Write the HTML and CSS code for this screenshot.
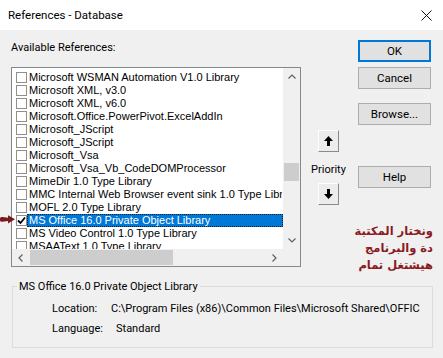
FILE: index.html
```html
<!DOCTYPE html>
<html lang="en">
<head>
    <meta charset="UTF-8">
    <meta name="viewport" content="width=device-width, initial-scale=1.0">
    <title>References - Database</title>
    <link rel="stylesheet" href="styles.css">
</head>
<body>
    <div class="titlebar">
        <span class="title">References - Database</span>
        <svg class="close" width="11" height="11" viewBox="0 0 11 11">
            <path d="M0.5 0.5 L10.5 10.5 M10.5 0.5 L0.5 10.5" stroke="#111" stroke-width="1" fill="none"/>
        </svg>
    </div>

    <div class="dialog">
        <div class="refs">
            <div class="caption">Available References:</div>
            <div class="listbox">
                <svg class="marker" width="15" height="9" viewBox="0 0 15 9">
                    <path d="M0 3.5 Q0 1.5 2.5 2 L8 2.8 L8 0.2 L15 4.3 L8 8.6 L8 6 L2.5 6.8 Q0 7.2 0 5.2 Z" fill="#7b1a1e"/>
                </svg>
                <div class="list-main">
                    <ul class="items">
                        <li class="item"><span class="check"></span><span class="name">Microsoft WSMAN Automation V1.0 Library</span></li>
                        <li class="item"><span class="check"></span><span class="name">Microsoft XML, v3.0</span></li>
                        <li class="item"><span class="check"></span><span class="name">Microsoft XML, v6.0</span></li>
                        <li class="item"><span class="check"></span><span class="name">Microsoft.Office.PowerPivot.ExcelAddIn</span></li>
                        <li class="item"><span class="check"></span><span class="name">Microsoft_JScript</span></li>
                        <li class="item"><span class="check"></span><span class="name">Microsoft_JScript</span></li>
                        <li class="item"><span class="check"></span><span class="name">Microsoft_Vsa</span></li>
                        <li class="item"><span class="check"></span><span class="name">Microsoft_Vsa_Vb_CodeDOMProcessor</span></li>
                        <li class="item"><span class="check"></span><span class="name">MimeDir 1.0 Type Library</span></li>
                        <li class="item"><span class="check"></span><span class="name">MMC Internal Web Browser event sink 1.0 Type Library</span></li>
                        <li class="item"><span class="check"></span><span class="name">MOFL 2.0 Type Library</span></li>
                        <li class="item selected">
                            <span class="check">
                                <svg width="9" height="9" viewBox="0 0 9 9"><path d="M1 4.5 L3.5 7 L8 1.5" stroke="#000" stroke-width="1.8" fill="none"/></svg>
                            </span>
                            <span class="name">MS Office 16.0 Private Object Library</span>
                        </li>
                        <li class="item"><span class="check"></span><span class="name">MS Video Control 1.0 Type Library</span></li>
                        <li class="item"><span class="check"></span><span class="name">MSAAText 1.0 Type Library</span></li>
                    </ul>
                    <div class="vscroll">
                        <div class="sb-btn">
                            <svg width="8" height="5" viewBox="0 0 8 5"><path d="M0.5 4.5 L4 1 L7.5 4.5" stroke="#606060" stroke-width="1.2" fill="none"/></svg>
                        </div>
                        <div class="vtrack"><div class="vthumb"></div></div>
                        <div class="sb-btn">
                            <svg width="8" height="5" viewBox="0 0 8 5"><path d="M0.5 0.5 L4 4 L7.5 0.5" stroke="#606060" stroke-width="1.2" fill="none"/></svg>
                        </div>
                    </div>
                </div>
                <div class="hrow">
                    <div class="hscroll">
                        <div class="sb-btn">
                            <svg width="5" height="8" viewBox="0 0 5 8"><path d="M4.5 0.5 L1 4 L4.5 7.5" stroke="#606060" stroke-width="1.2" fill="none"/></svg>
                        </div>
                        <div class="hthumb"></div>
                        <div class="sb-btn sb-end">
                            <svg width="5" height="8" viewBox="0 0 5 8"><path d="M0.5 0.5 L4 4 L0.5 7.5" stroke="#606060" stroke-width="1.2" fill="none"/></svg>
                        </div>
                    </div>
                    <div class="corner"></div>
                </div>
            </div>
        </div>

        <div class="priority">
            <button class="arrow-btn" type="button">
                <svg width="9" height="10" viewBox="0 0 9 10"><path d="M4.5 0 L9 5 L6 5 L6 10 L3 10 L3 5 L0 5 Z" fill="#000"/></svg>
            </button>
            <span class="priority-label">Priority</span>
            <button class="arrow-btn down" type="button">
                <svg width="9" height="10" viewBox="0 0 9 10"><path d="M4.5 10 L9 5 L6 5 L6 0 L3 0 L3 5 L0 5 Z" fill="#000"/></svg>
            </button>
        </div>

        <div class="actions">
            <button class="btn default" type="button">OK</button>
            <button class="btn cancel" type="button">Cancel</button>
            <button class="btn browse" type="button">Browse...</button>
            <button class="btn help" type="button">Help</button>
            <p class="note" dir="rtl" lang="ar">ونختار المكتبة<br>دة والبرنامج<br>هيشتغل تمام</p>
        </div>
    </div>

    <fieldset class="details">
        <legend>MS Office 16.0 Private Object Library</legend>
        <div class="detail-row">
            <span class="loc-label">Location:</span>
            <span>C:\Program Files (x86)\Common Files\Microsoft Shared\OFFIC</span>
        </div>
        <div class="detail-row">
            <span class="lang-label">Language:</span>
            <span>Standard</span>
        </div>
    </fieldset>
</body>
</html>
```

FILE: styles.css
```css
body {
    margin: 0;
    width: 443px;
    height: 358px;
    overflow: hidden;
    background-color: #f0f0f0;
    font-family: "Segoe UI", Roboto, sans-serif;
    font-size: 11px;
    color: #000;
}
.titlebar {
    height: 30px;
    background-color: #fff;
    display: flex;
    align-items: center;
    justify-content: space-between;
    padding: 0 11px 0 8px;
    font-size: 11.5px;
}
.close {
    display: block;
}
.dialog {
    display: flex;
    height: 237px;
    padding-left: 11px;
}
.refs {
    width: 290px;
}
.caption {
    margin-top: 10px;
    line-height: 15px;
}
.listbox {
    position: relative;
    margin-top: 12px;
    width: 288px;
    border: 1px solid #828790;
    background-color: #fff;
}
.marker {
    position: absolute;
    left: -12px;
    top: 147px;
}
.list-main {
    display: flex;
    height: 181px;
}
.items {
    list-style: none;
    margin: 0;
    padding: 3px 0 0;
    width: 271px;
    overflow: hidden;
    font-family: "Liberation Sans", Arial, sans-serif;
    font-size: 11px;
}
.item {
    display: flex;
    align-items: center;
    height: 13px;
}
.check {
    flex: none;
    width: 9px;
    height: 9px;
    margin-left: 4px;
    border: 1px solid #8f8f8f;
    background-color: #fff;
    display: flex;
    align-items: center;
    justify-content: center;
}
.name {
    flex: 1;
    min-width: 0;
    height: 13px;
    box-sizing: border-box;
    padding: 0 2px 0 1px;
    border: 1px dotted transparent;
    line-height: 11px;
    white-space: nowrap;
    overflow: hidden;
}
.selected .name {
    background-color: #0078d7;
    color: #fff;
    border-color: #1a1a1a;
}
.vscroll {
    width: 17px;
    background-color: #f0f0f0;
    display: flex;
    flex-direction: column;
}
.sb-btn {
    flex: none;
    width: 17px;
    height: 17px;
    display: flex;
    align-items: center;
    justify-content: center;
}
.vtrack {
    flex: 1;
}
.vthumb {
    margin: 78px 1px 0;
    height: 18px;
    background-color: #cdcdcd;
}
.hrow {
    display: flex;
    height: 17px;
}
.hscroll {
    width: 271px;
    display: flex;
    background-color: #f0f0f0;
}
.hthumb {
    width: 143px;
    height: 15px;
    margin: 1px 0 0 1px;
    background-color: #cdcdcd;
}
.sb-end {
    margin-left: auto;
}
.corner {
    width: 17px;
    background-color: #f0f0f0;
}
.priority {
    width: 55px;
    padding-right: 2px;
    display: flex;
    flex-direction: column;
    align-items: center;
    padding-top: 100px;
}
.arrow-btn {
    width: 21px;
    height: 22px;
    padding: 0;
    background-color: #ececec;
    border: 1px solid;
    border-color: #fdfdfd #8a8a8a #8a8a8a #fdfdfd;
    display: flex;
    align-items: center;
    justify-content: center;
}
.priority-label {
    margin-top: 10px;
    line-height: 15px;
}
.arrow-btn.down {
    margin-top: 6px;
}
.actions {
    width: 73px;
}
.btn {
    display: block;
    width: 73px;
    height: 22px;
    padding: 0;
    border: 1px solid #adadad;
    background-color: #e1e1e1;
    font-family: inherit;
    font-size: 11.5px;
    color: #000;
}
.btn.default {
    margin-top: 10px;
    border-color: #0078d7;
    box-shadow: inset 0 0 0 1px #0078d7;
}
.btn.cancel {
    margin-top: 5px;
}
.btn.browse {
    margin-top: 14px;
}
.btn.help {
    margin-top: 41px;
}
.note {
    margin: 35px -2px 0 0;
    font-family: "DejaVu Sans", sans-serif;
    font-weight: bold;
    font-size: 11.5px;
    line-height: 17px;
    color: #8b1a1f;
    text-align: right;
    white-space: nowrap;
}
.details {
    margin: 12px 10px 0 12px;
    padding: 5px 0 8px 4px;
    min-width: 0;
    border: 1px solid #dcdcdc;
}
.details legend {
    padding: 0 2px;
    line-height: 15px;
}
.detail-row {
    display: flex;
    margin-left: 35px;
    line-height: 20px;
    white-space: nowrap;
}
.loc-label {
    width: 59px;
}
.lang-label {
    width: 64px;
}
```
